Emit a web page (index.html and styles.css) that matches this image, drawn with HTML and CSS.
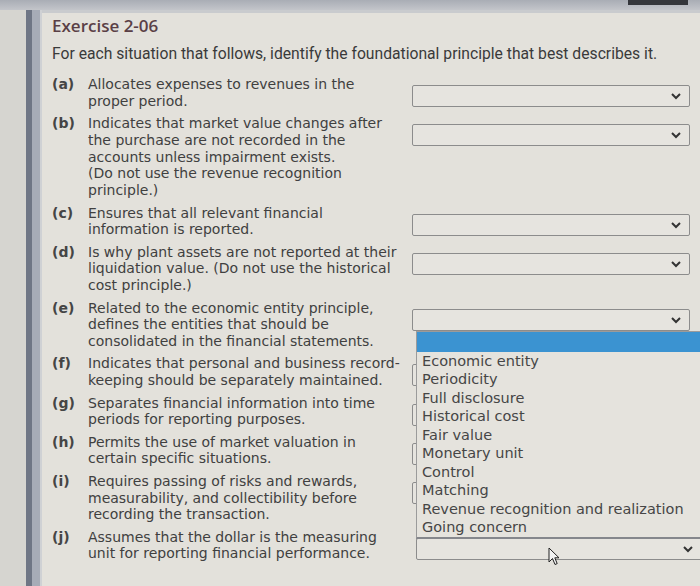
FILE: index.html
```html
<!DOCTYPE html>
<html>
<head>
<meta charset="utf-8">
<link rel="stylesheet" href="styles.css">
</head>
<body>
<div class="screen">
  <div class="topbar"><div class="topbtn"></div></div>
  <div class="main">
    <div class="rail"><div class="rail-dark"></div><div class="rail-light"></div></div>
    <div class="panel">
      <h1 class="title">Exercise 2-06</h1>
      <p class="intro">For each situation that follows, identify the foundational principle that best describes it.</p>
      <ol class="items">
        <li class="item">
          <span class="lbl">(a)</span>
          <span class="txt">Allocates expenses to revenues in the<br>proper period.</span>
          <div class="sel"><svg class="chev" viewBox="0 0 10 7"><polyline points="1,1 5,5 9,1"/></svg></div>
        </li>
        <li class="item">
          <span class="lbl">(b)</span>
          <span class="txt">Indicates that market value changes after<br>the purchase are not recorded in the<br>accounts unless impairment exists.<br>(Do not use the revenue recognition<br>principle.)</span>
          <div class="sel"><svg class="chev" viewBox="0 0 10 7"><polyline points="1,1 5,5 9,1"/></svg></div>
        </li>
        <li class="item">
          <span class="lbl">(c)</span>
          <span class="txt">Ensures that all relevant financial<br>information is reported.</span>
          <div class="sel"><svg class="chev" viewBox="0 0 10 7"><polyline points="1,1 5,5 9,1"/></svg></div>
        </li>
        <li class="item">
          <span class="lbl">(d)</span>
          <span class="txt">Is why plant assets are not reported at their<br>liquidation value. (Do not use the historical<br>cost principle.)</span>
          <div class="sel"><svg class="chev" viewBox="0 0 10 7"><polyline points="1,1 5,5 9,1"/></svg></div>
        </li>
        <li class="item">
          <span class="lbl">(e)</span>
          <span class="txt">Related to the economic entity principle,<br>defines the entities that should be<br>consolidated in the financial statements.</span>
          <div class="sel open">
            <svg class="chev" viewBox="0 0 10 7"><polyline points="1,1 5,5 9,1"/></svg>
            <ul class="menu">
              <li class="opt hl"></li>
              <li class="opt">Economic entity</li>
              <li class="opt">Periodicity</li>
              <li class="opt">Full disclosure</li>
              <li class="opt">Historical cost</li>
              <li class="opt">Fair value</li>
              <li class="opt">Monetary unit</li>
              <li class="opt">Control</li>
              <li class="opt">Matching</li>
              <li class="opt">Revenue recognition and realization</li>
              <li class="opt">Going concern</li>
            </ul>
          </div>
        </li>
        <li class="item">
          <span class="lbl">(f)</span>
          <span class="txt">Indicates that personal and business record-<br>keeping should be separately maintained.</span>
          <div class="sel"></div>
        </li>
        <li class="item">
          <span class="lbl">(g)</span>
          <span class="txt">Separates financial information into time<br>periods for reporting purposes.</span>
          <div class="sel"></div>
        </li>
        <li class="item">
          <span class="lbl">(h)</span>
          <span class="txt">Permits the use of market valuation in<br>certain specific situations.</span>
          <div class="sel"></div>
        </li>
        <li class="item">
          <span class="lbl">(i)</span>
          <span class="txt">Requires passing of risks and rewards,<br>measurability, and collectibility before<br>recording the transaction.</span>
          <div class="sel"></div>
        </li>
        <li class="item">
          <span class="lbl">(j)</span>
          <span class="txt">Assumes that the dollar is the measuring<br>unit for reporting financial performance.</span>
          <div class="sel last">
            <svg class="chev" viewBox="0 0 10 7"><polyline points="1,1 5,5 9,1"/></svg>
            <svg class="cursor" viewBox="0 0 12 19"><path d="M1 1 L1 15 L4.5 11.5 L7 17.5 L9.2 16.6 L6.8 10.8 L11 10.8 Z"/></svg>
          </div>
        </li>
      </ol>
    </div>
  </div>
</div>
</body>
</html>
```

FILE: styles.css
```css
html, body {
  margin: 0;
  padding: 0;
}
body {
  width: 700px;
  height: 586px;
  overflow: hidden;
  background: #d5d4cf;
  font-family: "DejaVu Sans", Verdana, sans-serif;
  color: #3d3d3d;
}
.screen {
  width: 700px;
  height: 586px;
  display: flex;
  flex-direction: column;
}
.topbar {
  height: 10px;
  background: linear-gradient(#a9adb5, #c3c5ca);
  display: flex;
  justify-content: flex-end;
  padding-right: 12px;
  flex: none;
}
.topbtn {
  width: 60px;
  height: 5px;
  background: #34363b;
}
.main {
  flex: 1;
  display: flex;
  min-height: 0;
}
.rail {
  width: 42px;
  flex: none;
  display: flex;
  justify-content: flex-end;
  background: #d6d5d0;
}
.rail-dark {
  width: 6px;
  background: #6f7685;
}
.rail-light {
  width: 8px;
  background: #a7acb7;
  border-right: 2px solid #cfd1d4;
}
.panel {
  flex: 1;
  min-width: 0;
  overflow: hidden;
  background: #e3e1db;
  border-top: 3px solid #c9cbce;
  padding: 2px 10px 0 10px;
}
.title {
  margin: 0;
  font-family: "Open Sans", "Noto Sans", sans-serif;
  font-weight: 600;
  font-size: 17px;
  line-height: 22px;
  color: #5a3f46;
  letter-spacing: 0;
}
.intro {
  margin: 7px 0 0 0;
  font-family: Roboto, "Liberation Sans", sans-serif;
  font-size: 15.7px;
  line-height: 20px;
  color: #3a3a3a;
}
.items {
  list-style: none;
  margin: 12px 0 0 0;
  padding: 0;
}
.item {
  display: grid;
  grid-template-columns: 36px 324px 278px;
  margin-bottom: 5.5px;
  font-size: 14px;
  line-height: 16.8px;
}
.lbl {
  font-weight: bold;
  color: #454545;
}
.txt {
  white-space: nowrap;
  color: #404040;
}
.sel {
  position: relative;
  height: 22px;
  margin-top: 9px;
  border: 1px solid #8c8c8c;
  border-radius: 2px;
  background: #e6e4df;
  box-sizing: border-box;
}
.sel.last {
  margin-left: 4px;
  margin-right: -12px;
}
.chev {
  position: absolute;
  right: 8px;
  top: 7px;
  width: 10px;
  height: 7px;
  fill: none;
  stroke: #333;
  stroke-width: 2;
}
.menu {
  position: absolute;
  z-index: 2;
  left: 3px;
  top: 21px;
  width: 300px;
  margin: 0;
  padding: 0;
  list-style: none;
  background: #e5e3dd;
  border: 1px solid #9b9b9b;
  border-bottom: 2px solid #85878c;
  box-sizing: border-box;
}
.opt {
  height: 18.5px;
  line-height: 18.5px;
  padding-left: 5px;
  font-size: 14.5px;
  color: #464646;
  white-space: nowrap;
}
.opt.hl {
  height: 20px;
  background: #3b93d1;
}
.cursor {
  position: absolute;
  left: 131px;
  top: 8px;
  width: 12px;
  height: 19px;
  fill: #f2f2f2;
  stroke: #222;
  stroke-width: 1;
}
```
